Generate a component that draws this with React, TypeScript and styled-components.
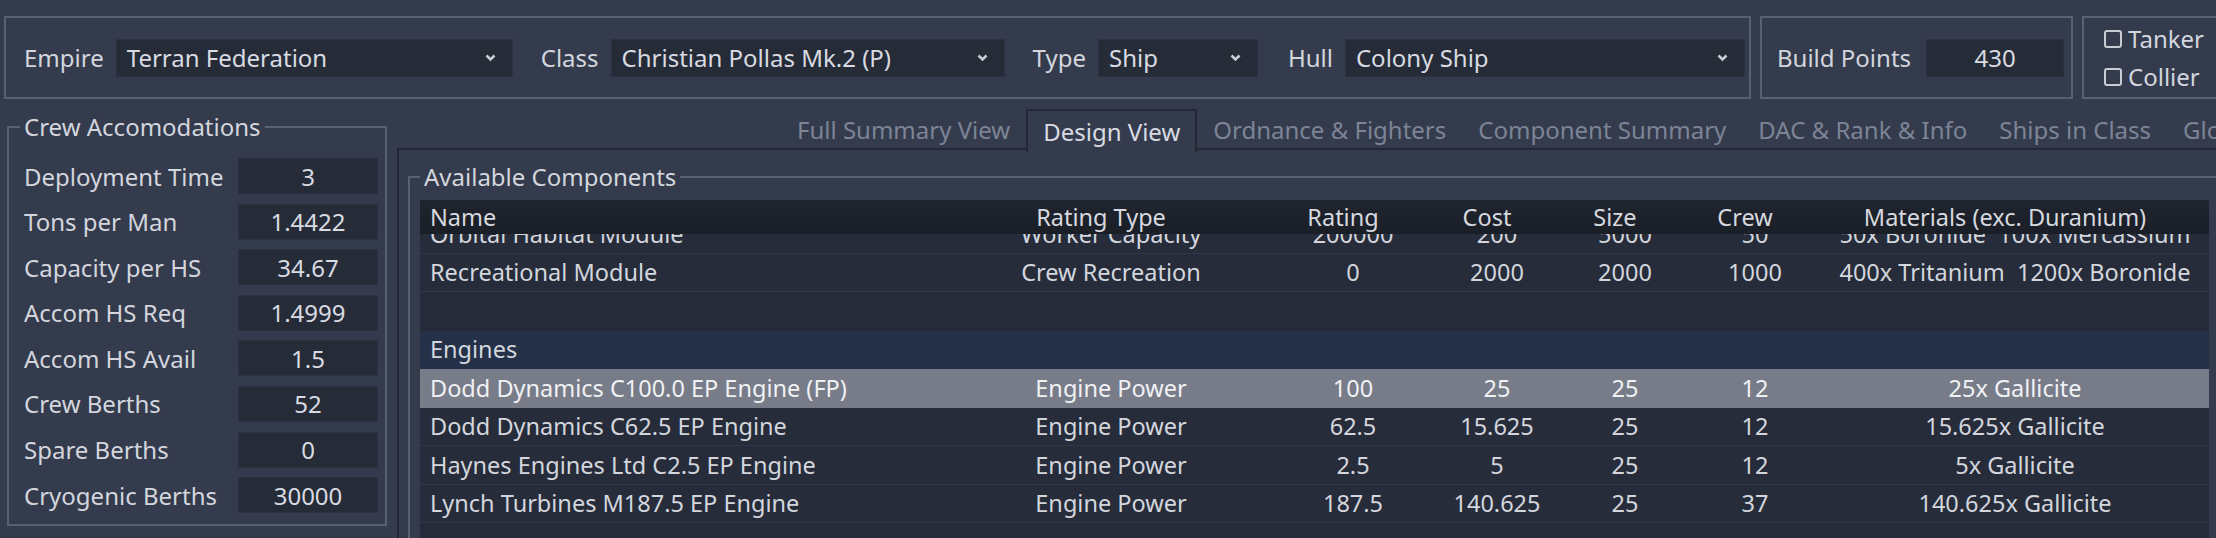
import React, { useLayoutEffect, useRef } from 'react';
import styled, { createGlobalStyle } from 'styled-components';

const BG = '#343b4d';
const FIELD_BG = '#262b38';
const FRAME_LINE = '#586074';
const PANEL_LINE = '#232834';
const TEXT = '#d3d6dd';

const GlobalStyle = createGlobalStyle`
  html, body {
    margin: 0;
    padding: 0;
    background: ${BG};
  }
  body {
    font-family: "Noto Sans", "Open Sans", sans-serif;
    font-size: 24px;
    color: ${TEXT};
  }
  * {
    box-sizing: border-box;
  }
`;

const Window = styled.div`
  width: 2216px;
  height: 538px;
  overflow: hidden;
  background: ${BG};
`;

/* ---------- top selector bar ---------- */

const TopBar = styled.div`
  display: flex;
  gap: 9px;
  height: 99px;
  padding: 16px 0 0 4px;
`;

const Frame = styled.div<{ $width: number; $column?: boolean; $pad: number; $gap?: number }>`
  flex: 0 0 auto;
  width: ${p => p.$width}px;
  height: 83px;
  border: 2px solid ${FRAME_LINE};
  display: flex;
  flex-direction: ${p => (p.$column ? 'column' : 'row')};
  justify-content: ${p => (p.$column ? 'center' : 'flex-start')};
  align-items: ${p => (p.$column ? 'flex-start' : 'center')};
  gap: ${p => p.$gap ?? 0}px;
  padding-left: ${p => p.$pad}px;
`;

const Field = styled.div<{ $spaced?: number }>`
  display: flex;
  align-items: center;
  gap: 12px;
  white-space: nowrap;
  margin-left: ${p => p.$spaced ?? 0}px;
`;

const Combo = styled.div<{ $width: number }>`
  width: ${p => p.$width}px;
  height: 38px;
  background: ${FIELD_BG};
  border: 1px solid #2b3140;
  display: flex;
  align-items: center;
  justify-content: space-between;
  padding: 0 16px 0 10px;
  color: #d8dbe1;
`;

const ValueBox = styled.div<{ $width?: number; $height?: number }>`
  width: ${p => (p.$width ? `${p.$width}px` : 'auto')};
  height: ${p => p.$height ?? 36}px;
  background: ${FIELD_BG};
  border: 1px solid #2b3140;
  display: flex;
  align-items: center;
  justify-content: center;
  color: #d8dbe1;
`;

const CheckRow = styled.label`
  height: 38px;
  display: flex;
  align-items: center;
  gap: 6px;
  white-space: nowrap;
`;

const CheckBox = styled.span`
  width: 18px;
  height: 18px;
  border: 2px solid #c9ccd3;
  border-radius: 3px;
`;

const Chevron = () => (
  <svg width="11" height="8" viewBox="0 0 11 8">
    <polyline points="1.5,1.5 5.5,5.5 9.5,1.5" fill="none" stroke="#c9ccd3" strokeWidth="2.6" />
  </svg>
);

/* ---------- main area ---------- */

const Main = styled.div`
  display: flex;
  gap: 10px;
  margin-top: 10px;
  padding-left: 7px;
`;

const Group = styled.fieldset<{ $pad: string }>`
  margin: 0;
  min-width: 0;
  border: 2px solid ${FRAME_LINE};
  padding: ${p => p.$pad};
`;

const Legend = styled.legend<{ $shift: number }>`
  padding: 0 4px;
  margin-left: ${p => p.$shift}px;
  line-height: 33px;
  font-size: 24px;
  white-space: nowrap;
`;

const CrewGroup = styled(Group)`
  width: 380px;
  height: 416px;
  margin-top: 1px;
  flex: 0 0 auto;
`;

const StatGrid = styled.div`
  display: grid;
  grid-template-columns: 1fr 140px;
  grid-auto-rows: 36px;
  row-gap: 9.6px;
  align-items: center;
`;

const StatLabel = styled.span`
  white-space: nowrap;
`;

const Tabs = styled.div`
  flex: 1 1 auto;
  min-width: 0;
  display: flex;
  flex-direction: column;
`;

const TabBar = styled.div`
  display: flex;
  height: 41px;
  padding-left: 384px;
  margin-bottom: -2px;
  position: relative;
  z-index: 1;
`;

const Tab = styled.div<{ $active?: boolean }>`
  flex: 0 0 auto;
  display: flex;
  align-items: center;
  white-space: nowrap;
  padding: 0 ${p => (p.$active ? 15 : 16)}px;
  color: ${p => (p.$active ? '#d8dbe1' : '#7c8496')};
  background: ${p => (p.$active ? BG : 'transparent')};
  border: ${p => (p.$active ? `2px solid ${PANEL_LINE}` : 'none')};
  border-bottom: none;
  height: ${p => (p.$active ? 43 : 41)}px;
`;

const TabPanel = styled.div`
  border-top: 2px solid ${PANEL_LINE};
  border-left: 2px solid ${PANEL_LINE};
  padding: 10px 0 0 9px;
  height: 400px;
`;

const ComponentsGroup = styled(Group)`
  width: 1830px;
  height: 420px;
`;

/* ---------- components table ---------- */

const COLUMNS = '515px 352px 132px 156px 100px 160px 360px 14px';

const Table = styled.div`
  width: 1789px;
  background: #262c3a;
  font-size: 23.5px;
`;

const HeaderRow = styled.div`
  display: grid;
  grid-template-columns: ${COLUMNS};
  height: 34px;
  background: linear-gradient(#20242e, #1a1e27);
  align-items: center;
  color: #d6d9df;
`;

const HeadCell = styled.div<{ $left?: boolean }>`
  text-align: ${p => (p.$left ? 'left' : 'center')};
  padding: ${p => (p.$left ? '0 0 0 10px' : '0 20px 0 0')};
  white-space: nowrap;
  line-height: 34px;
`;

const Body = styled.div`
  height: 310px;
  overflow: hidden;
`;

const Row = styled.div<{ $selected?: boolean }>`
  display: grid;
  grid-template-columns: ${COLUMNS};
  height: 38.5px;
  align-items: center;
  background: ${p => (p.$selected ? '#777c88' : 'transparent')};
  border-bottom: 1px solid ${p => (p.$selected ? '#777c88' : '#30374a')};
  color: ${p => (p.$selected ? '#f0f1f4' : '#d3d6dd')};
`;

const Cell = styled.div<{ $left?: boolean }>`
  text-align: ${p => (p.$left ? 'left' : 'center')};
  padding-left: ${p => (p.$left ? 10 : 0)}px;
  white-space: pre;
  overflow: hidden;
`;

const CategoryRow = styled.div`
  height: 38.5px;
  display: flex;
  align-items: center;
  padding-left: 10px;
  background: #243149;
  border-bottom: 1px solid #243149;
`;

const SpacerRow = styled.div`
  height: 38.5px;
  background: #252b38;
`;

type Item = {
  name: string;
  ratingType: string;
  rating: string;
  cost: string;
  size: string;
  crew: string;
  materials: string;
  selected?: boolean;
};

type Line = { kind: 'item'; item: Item } | { kind: 'category'; title: string } | { kind: 'blank' };

const lines: Line[] = [
  {
    kind: 'item',
    item: {
      name: 'Orbital Habitat Module',
      ratingType: 'Worker Capacity',
      rating: '200000',
      cost: '200',
      size: '5000',
      crew: '50',
      materials: '50x Boronide  100x Mercassium',
    },
  },
  {
    kind: 'item',
    item: {
      name: 'Recreational Module',
      ratingType: 'Crew Recreation',
      rating: '0',
      cost: '2000',
      size: '2000',
      crew: '1000',
      materials: '400x Tritanium  1200x Boronide',
    },
  },
  { kind: 'blank' },
  { kind: 'category', title: 'Engines' },
  {
    kind: 'item',
    item: {
      name: 'Dodd Dynamics C100.0 EP Engine (FP)',
      ratingType: 'Engine Power',
      rating: '100',
      cost: '25',
      size: '25',
      crew: '12',
      materials: '25x Gallicite',
      selected: true,
    },
  },
  {
    kind: 'item',
    item: {
      name: 'Dodd Dynamics C62.5 EP Engine',
      ratingType: 'Engine Power',
      rating: '62.5',
      cost: '15.625',
      size: '25',
      crew: '12',
      materials: '15.625x Gallicite',
    },
  },
  {
    kind: 'item',
    item: {
      name: 'Haynes Engines Ltd C2.5 EP Engine',
      ratingType: 'Engine Power',
      rating: '2.5',
      cost: '5',
      size: '25',
      crew: '12',
      materials: '5x Gallicite',
    },
  },
  {
    kind: 'item',
    item: {
      name: 'Lynch Turbines M187.5 EP Engine',
      ratingType: 'Engine Power',
      rating: '187.5',
      cost: '140.625',
      size: '25',
      crew: '37',
      materials: '140.625x Gallicite',
    },
  },
  { kind: 'blank' },
];

const crewStats: [string, string][] = [
  ['Deployment Time', '3'],
  ['Tons per Man', '1.4422'],
  ['Capacity per HS', '34.67'],
  ['Accom HS Req', '1.4999'],
  ['Accom HS Avail', '1.5'],
  ['Crew Berths', '52'],
  ['Spare Berths', '0'],
  ['Cryogenic Berths', '30000'],
];

const tabs = [
  'Full Summary View',
  'Design View',
  'Ordnance & Fighters',
  'Component Summary',
  'DAC & Rank & Info',
  'Ships in Class',
  'Glossary',
];

const ComponentTable = () => {
  const bodyRef = useRef<HTMLDivElement>(null);

  // list is scrolled a little, the first module sits half under the header
  useLayoutEffect(() => {
    if (bodyRef.current) bodyRef.current.scrollTop = 19;
  }, []);

  return (
    <Table>
      <HeaderRow>
        <HeadCell $left>Name</HeadCell>
        <HeadCell>Rating Type</HeadCell>
        <HeadCell>Rating</HeadCell>
        <HeadCell>Cost</HeadCell>
        <HeadCell>Size</HeadCell>
        <HeadCell>Crew</HeadCell>
        <HeadCell>Materials (exc. Duranium)</HeadCell>
        <span />
      </HeaderRow>
      <Body ref={bodyRef}>
        {lines.map((line, i) => {
          if (line.kind === 'blank') return <SpacerRow key={i} />;
          if (line.kind === 'category') return <CategoryRow key={i}>{line.title}</CategoryRow>;
          const it = line.item;
          return (
            <Row key={i} $selected={it.selected}>
              <Cell $left>{it.name}</Cell>
              <Cell>{it.ratingType}</Cell>
              <Cell>{it.rating}</Cell>
              <Cell>{it.cost}</Cell>
              <Cell>{it.size}</Cell>
              <Cell>{it.crew}</Cell>
              <Cell>{it.materials}</Cell>
              <span />
            </Row>
          );
        })}
      </Body>
    </Table>
  );
};

export default function App() {
  return (
    <Window>
      <GlobalStyle />
      <TopBar>
        <Frame $width={1747} $pad={18} $gap={28}>
          <Field>
            Empire
            <Combo $width={397}>
              Terran Federation
              <Chevron />
            </Combo>
          </Field>
          <Field>
            Class
            <Combo $width={394}>
              Christian Pollas Mk.2 (P)
              <Chevron />
            </Combo>
          </Field>
          <Field>
            Type
            <Combo $width={160}>
              Ship
              <Chevron />
            </Combo>
          </Field>
          <Field $spaced={2}>
            Hull
            <Combo $width={400}>
              Colony Ship
              <Chevron />
            </Combo>
          </Field>
        </Frame>
        <Frame $width={313} $pad={15} $gap={15}>
          <Field>Build Points</Field>
          <ValueBox $width={138} $height={38}>
            430
          </ValueBox>
        </Frame>
        <Frame $width={160} $pad={20} $column>
          <CheckRow>
            <CheckBox />
            Tanker
          </CheckRow>
          <CheckRow>
            <CheckBox />
            Collier
          </CheckRow>
        </Frame>
      </TopBar>

      <Main>
        <CrewGroup $pad="15px 7px 0 15px">
          <Legend $shift={-4}>Crew Accomodations</Legend>
          <StatGrid>
            {crewStats.map(([label, value]) => (
              <React.Fragment key={label}>
                <StatLabel>{label}</StatLabel>
                <ValueBox>{value}</ValueBox>
              </React.Fragment>
            ))}
          </StatGrid>
        </CrewGroup>

        <Tabs>
          <TabBar>
            {tabs.map(t => (
              <Tab key={t} $active={t === 'Design View'}>
                {t}
              </Tab>
            ))}
          </TabBar>
          <TabPanel>
            <ComponentsGroup $pad="7px 10px 0 10px">
              <Legend $shift={0}>Available Components</Legend>
              <ComponentTable />
            </ComponentsGroup>
          </TabPanel>
        </Tabs>
      </Main>
    </Window>
  );
}
